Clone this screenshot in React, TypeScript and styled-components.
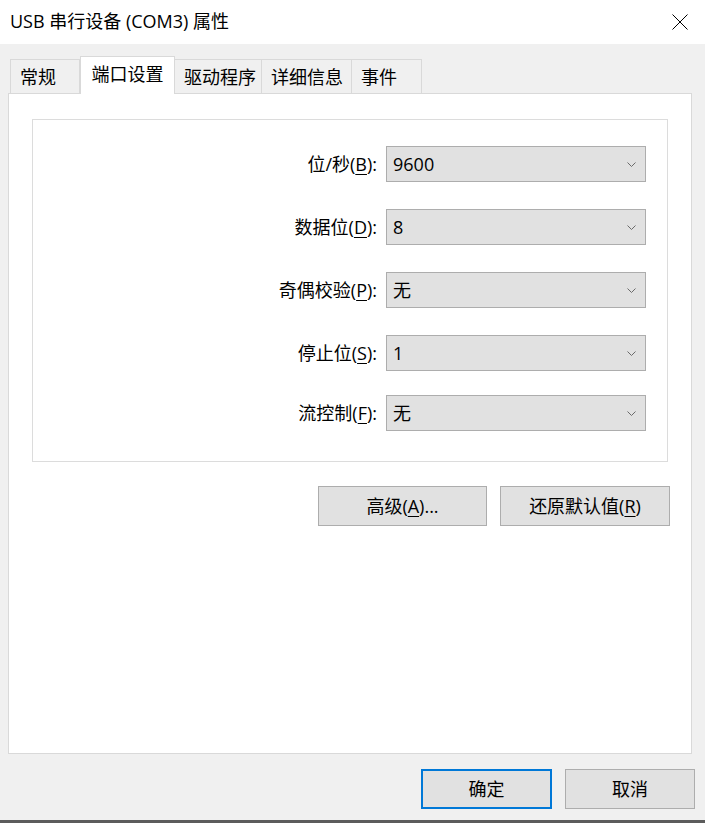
import { createGlobalStyle } from "styled-components";
import styled from "styled-components";

const GlobalStyle = createGlobalStyle`
    html, body {
        margin: 0;
        padding: 0;
        background-color: #f0f0f0;
    }
    * {
        box-sizing: border-box;
    }
`;

const font = `"Open Sans", "Noto Sans CJK SC", sans-serif`;

const Window = styled.div`
    width: 705px;
    height: 823px;
    display: flex;
    flex-direction: column;
    background-color: #f0f0f0;
    font-family: ${font};
    font-size: 18px;
    color: #000;
    border-bottom: 3px solid #5c5c5c;
`;

const TitleBar = styled.div`
    height: 44px;
    flex-shrink: 0;
    background-color: #fff;
    display: flex;
    align-items: center;
    justify-content: space-between;
    padding-left: 10px;
`;

const Title = styled.span`
    font-size: 18px;
    line-height: 1;
    margin-top: -2px;
`;

const CloseButton = styled.div`
    width: 48px;
    height: 44px;
    display: flex;
    align-items: center;
    justify-content: center;
    margin-right: 1px;
`;

const Body = styled.div`
    flex: 1;
    display: flex;
    flex-direction: column;
    padding-top: 13px;
`;

const TabStrip = styled.div`
    display: flex;
    align-items: flex-end;
    height: 37px;
    padding-left: 10px;
    position: relative;
    z-index: 1;
    margin-bottom: -1px;
`;

const Tab = styled.div<{ $active?: boolean; $width: number }>`
    width: ${(p) => p.$width}px;
    height: ${(p) => (p.$active ? 38 : 35)}px;
    display: flex;
    align-items: center;
    justify-content: ${(p) => (p.$active ? "center" : "flex-start")};
    padding-left: ${(p) => (p.$active ? 0 : 9)}px;
    padding-bottom: ${(p) => (p.$active ? 4 : 0)}px;
    background-color: ${(p) => (p.$active ? "#fff" : "#f0f0f0")};
    border: 1px solid #d9d9d9;
    border-bottom: ${(p) => (p.$active ? "none" : "1px solid #d9d9d9")};
    border-left: ${(p) => (p.$active ? "1px solid #d9d9d9" : "none")};
    &:first-child {
        border-left: 1px solid #d9d9d9;
    }
    font-size: 18px;
    line-height: 1;
`;

const Panel = styled.div`
    margin-left: 8px;
    width: 684px;
    height: 661px;
    background-color: #fff;
    border: 1px solid #d9d9d9;
    padding: 25px 0 0 23px;
`;

const GroupBox = styled.div`
    width: 636px;
    height: 343px;
    border: 1px solid #dcdcdc;
    padding: 26px 21px 0 0;
    display: flex;
    flex-direction: column;
`;

const FieldRow = styled.div<{ $gap: number }>`
    display: flex;
    align-items: center;
    justify-content: flex-end;
    gap: 9px;
    margin-top: ${(p) => p.$gap}px;
    &:first-child {
        margin-top: 0;
    }
`;

const Label = styled.label`
    font-size: 18px;
    line-height: 1;
    text-align: right;
`;

const Key = styled.span`
    text-decoration: underline;
    text-underline-offset: 3px;
    text-decoration-thickness: 1px;
`;

const Combo = styled.div`
    width: 260px;
    height: 36px;
    background-color: #e1e1e1;
    border: 1px solid #adadad;
    display: flex;
    align-items: center;
    justify-content: space-between;
    padding: 0 9px 0 6px;
    font-size: 18px;
    line-height: 1;
`;

const ButtonRow = styled.div`
    width: 638px;
    display: flex;
    justify-content: flex-end;
    gap: 13px;
    margin-top: 24px;
`;

const Button = styled.div<{ $default?: boolean; $width: number }>`
    width: ${(p) => p.$width}px;
    height: 40px;
    background-color: #e1e1e1;
    border: 1px solid ${(p) => (p.$default ? "#0078d7" : "#adadad")};
    box-shadow: ${(p) => (p.$default ? "inset 0 0 0 1px #0078d7" : "none")};
    display: flex;
    align-items: center;
    justify-content: center;
    font-size: 18px;
    line-height: 1;
`;

const Footer = styled.div`
    flex: 1;
    display: flex;
    justify-content: flex-end;
    gap: 13px;
    padding: 15px 10px 0 0;
`;

const Chevron = () => (
    <svg width="9" height="5" viewBox="0 0 9 5">
        <path d="M0.5 0.5 L4.5 4.5 L8.5 0.5" fill="none" stroke="#6a6a6a" strokeWidth="1" />
    </svg>
);

const CloseIcon = () => (
    <svg width="16" height="16" viewBox="0 0 16 16">
        <path d="M0.5 0.5 L15.5 15.5 M15.5 0.5 L0.5 15.5" stroke="#000" strokeWidth="1" />
    </svg>
);

const tabs = [
    { name: "常规", width: 70 },
    { name: "端口设置", width: 95, active: true },
    { name: "驱动程序", width: 87 },
    { name: "详细信息", width: 90 },
    { name: "事件", width: 70 },
];

const fields = [
    { label: "位/秒", key: "B", value: "9600", gap: 27 },
    { label: "数据位", key: "D", value: "8", gap: 27 },
    { label: "奇偶校验", key: "P", value: "无", gap: 27 },
    { label: "停止位", key: "S", value: "1", gap: 27 },
    { label: "流控制", key: "F", value: "无", gap: 24 },
];

function App() {
    return (
        <>
            <GlobalStyle />
            <Window>
                <TitleBar>
                    <Title>USB 串行设备 (COM3) 属性</Title>
                    <CloseButton>
                        <CloseIcon />
                    </CloseButton>
                </TitleBar>
                <Body>
                    <TabStrip>
                        {tabs.map((tab) => (
                            <Tab key={tab.name} $active={tab.active} $width={tab.width}>
                                {tab.name}
                            </Tab>
                        ))}
                    </TabStrip>
                    <Panel>
                        <GroupBox>
                            {fields.map((f) => (
                                <FieldRow key={f.key} $gap={f.gap}>
                                    <Label>
                                        {f.label}(<Key>{f.key}</Key>):
                                    </Label>
                                    <Combo>
                                        <span>{f.value}</span>
                                        <Chevron />
                                    </Combo>
                                </FieldRow>
                            ))}
                        </GroupBox>
                        <ButtonRow>
                            <Button $width={169}>
                                高级(<Key>A</Key>)...
                            </Button>
                            <Button $width={170}>
                                还原默认值(<Key>R</Key>)
                            </Button>
                        </ButtonRow>
                    </Panel>
                    <Footer>
                        <Button $default $width={131}>确定</Button>
                        <Button $width={130}>取消</Button>
                    </Footer>
                </Body>
            </Window>
        </>
    );
}

export default App;
